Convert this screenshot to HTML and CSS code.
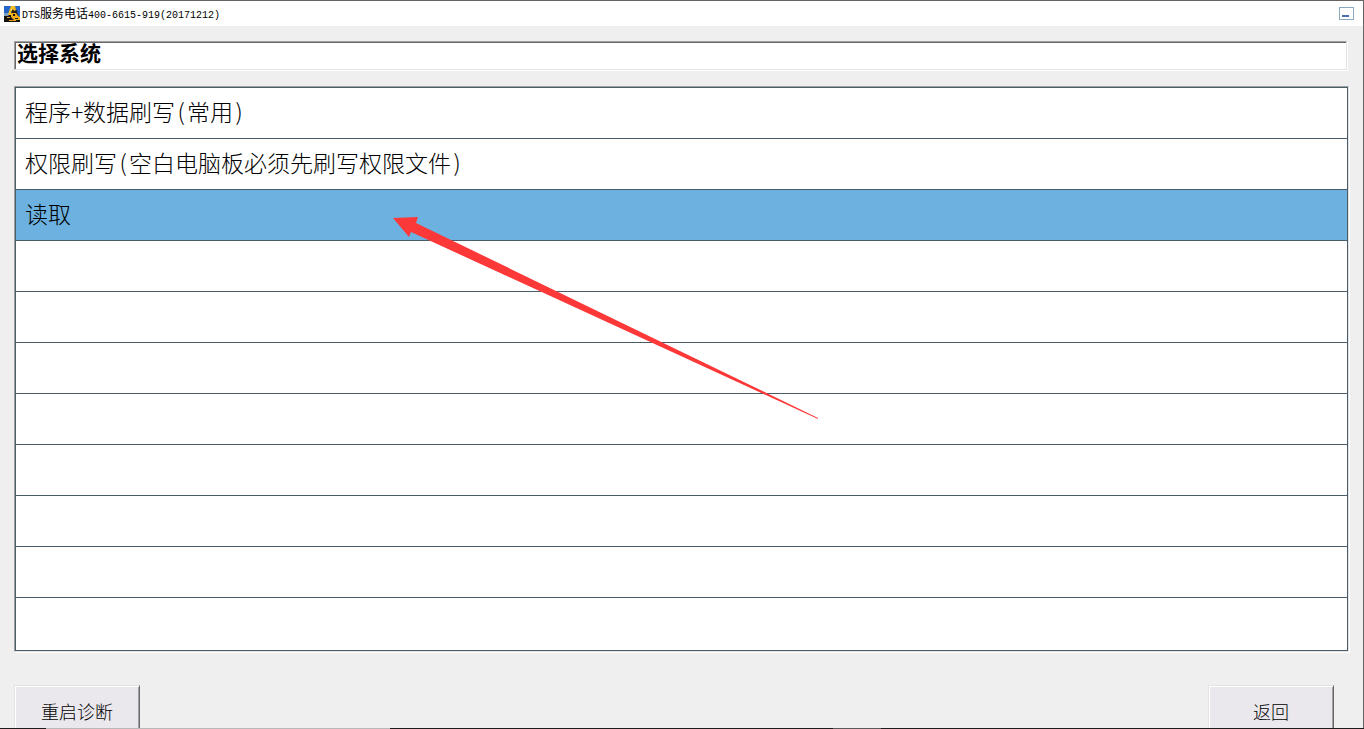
FILE: index.html
```html
<!DOCTYPE html>
<html lang="zh-CN">
<head>
    <meta charset="UTF-8">
    <meta name="viewport" content="width=device-width, initial-scale=1.0">
    <title>DTS</title>
    <link rel="stylesheet" href="styles.css">
</head>
<body>
    <div class="window">
        <header class="titlebar">
            <svg class="app-icon" viewBox="0 0 16 16" aria-hidden="true">
                <rect width="16" height="16" fill="#2464c8"/>
                <path d="M0 7h5v3H0z" fill="#7d9cc0"/>
                <path d="M0 10h4l2-2l7 0l3 4v4H0z" fill="#171310"/>
                <path d="M8 3l3-1l2 3l1 5H7z" fill="#2a1d12"/>
                <path d="M7 0h4l1 4l-2 1l-1-2l-2 3l0 3l-3 0l1-4z" fill="#f5bd20"/>
                <path d="M7 7h5l2 3l2 1v3h-6l-3-3z" fill="#f0ad1c"/>
                <path d="M3 11h3v1H3zM5 14h7v1H5z" fill="#e0a028"/>
                <path d="M9 8h2v2H9zM11 12h3v1h-3z" fill="#1b1712"/>
                <path d="M7 3h1v1H7z" fill="#fff0b0"/>
            </svg>
            <span class="title"><span class="latin">DTS</span>服务电话<span class="latin">400-6615-919(20171212)</span></span>
            <button class="minimize" type="button" aria-label="最小化"></button>
        </header>

        <main>
            <h1>选择系统</h1>

            <div class="list-wrap">
                <ul class="list" role="listbox" aria-label="选择系统">
                    <li role="option">程序<span class="half">+</span>数据刷写<span class="half">(</span>常用<span class="half">)</span></li>
                    <li role="option">权限刷写<span class="half">(</span>空白电脑板必须先刷写权限文件<span class="half">)</span></li>
                    <li role="option" class="selected" aria-selected="true">读取</li>
                    <li></li>
                    <li></li>
                    <li></li>
                    <li></li>
                    <li></li>
                    <li></li>
                    <li></li>
                    <li></li>
                </ul>
                <svg class="arrow" viewBox="0 0 426 203" aria-hidden="true">
                    <path d="M0 1L25 0L23 6L425 201L425 202L18 15L16 20Z" fill="#fd3838"/>
                </svg>
            </div>

            <div class="actions">
                <button type="button">重启诊断</button>
                <button type="button">返回</button>
            </div>
        </main>
    </div>
    <div class="taskbar"></div>
</body>
</html>
```

FILE: styles.css
```css
* {
    box-sizing: border-box;
}
body {
    margin: 0;
    height: 100vh;
    overflow: hidden;
    position: relative;
    background: #efefef;
    color: #000;
    font-family: "Noto Sans CJK SC", sans-serif;
}
.window {
    min-height: 100vh;
    border-top: 1px solid #646464;
    border-right: 1px solid #646464;
}

/* title bar */
.titlebar {
    display: flex;
    align-items: center;
    height: 25px;
    padding: 0 9px 0 4px;
    background: #fff;
}
.app-icon {
    width: 16px;
    height: 16px;
    margin-right: 2px;
}
.title {
    flex: 1;
    font-size: 12px;
    line-height: 25px;
}
.title .latin {
    font-family: "Liberation Mono", monospace;
    font-size: 10px;
}
.minimize {
    display: flex;
    align-items: flex-end;
    width: 15px;
    height: 13px;
    padding: 2px;
    border: 1px solid #8aaac4;
    background: #fff;
}
.minimize::after {
    content: "";
    width: 7px;
    height: 2px;
    background: #4a6fad;
}

main {
    padding: 15px 14px 0;
}
h1 {
    height: 29px;
    margin: 0 2px 16px 0;
    padding-left: 2px;
    border: 1px solid;
    border-color: #a0a0a0 #e3e3e3 #e3e3e3 #a0a0a0;
    box-shadow: inset 1px 1px #696969, 1px 1px #fff;
    background: #fff;
    font-size: 21px;
    line-height: 20px;
    font-weight: bold;
}

/* system list */
.list-wrap {
    position: relative;
}
.list {
    margin: 0;
    padding: 0;
    list-style: none;
    background: #fff;
    border: 1px solid;
    border-color: #a0a0a0 #e3e3e3 #e3e3e3 #a0a0a0;
    box-shadow: 1px 1px #fff;
}
.list li {
    height: 51px;
    padding-left: 9px;
    border: 1px solid #4a5c68;
    border-top: none;
    font-size: 23px;
    line-height: 46px;
    font-weight: 300;
}
.list li:first-child {
    height: 52px;
    border-top: 1px solid #4a5c68;
}
.list li:last-child {
    height: 53px;
}
/* half-width characters take half a cell */
.half {
    display: inline-block;
    width: 12px;
    text-align: center;
}
.list .selected {
    background: #6cb1df;
}
.arrow {
    position: absolute;
    left: 379px;
    top: 131px;
    width: 426px;
    height: 203px;
}

/* bottom buttons */
.actions {
    display: flex;
    justify-content: space-between;
    padding: 33px 15px 0 0;
}
.actions button {
    width: 126px;
    height: 56px;
    padding: 0 0 4px;
    border: 1px solid;
    border-color: #e3e3e3 #696969 #696969 #e3e3e3;
    box-shadow: inset 1px 1px #fff, inset -1px -1px #a0a0a0;
    background: #eae8ed;
    color: #000;
    font-family: inherit;
    font-size: 18px;
    font-weight: 300;
}
.taskbar {
    position: absolute;
    left: 0;
    right: 0;
    bottom: 0;
    height: 1px;
    background: linear-gradient(to right, #1c1c1c 46px, #b8b8b8 46px 390px, #1c1c1c 390px 833px, #5a5a5a 833px 881px, #1c1c1c 881px);
}
```
